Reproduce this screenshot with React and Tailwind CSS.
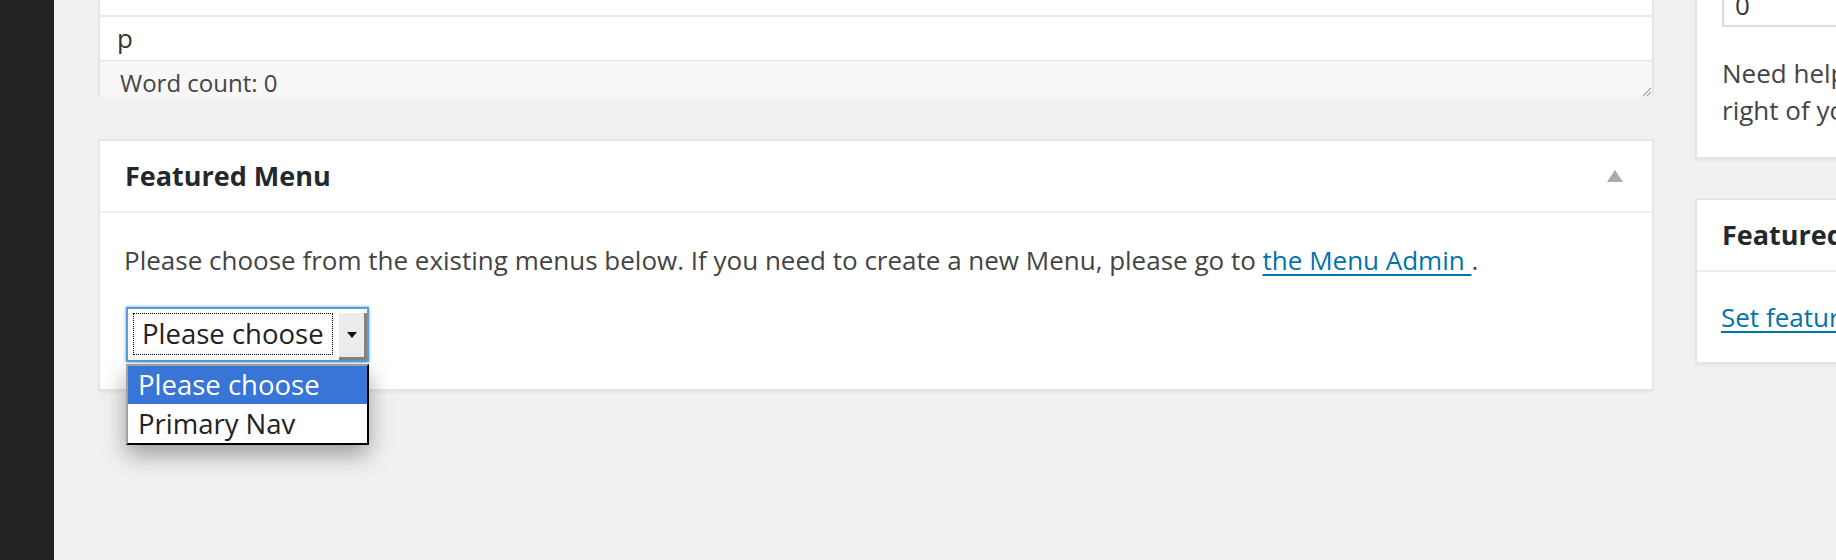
import React from 'react';

function ResizeHandle() {
    return (
        <svg width="12" height="12" viewBox="0 0 12 12" className="absolute bottom-0 right-0">
            <path d="M11 3 L3 11 M11 7 L7 11" stroke="#a7a7a7" strokeWidth="1.2" />
        </svg>
    );
}

function MenuSelect() {
    return (
        <div className="relative ml-[2px] mt-[29px] w-[243px]">
            <div className="flex h-[55px] border-2 border-[#5b9dd9] bg-white shadow-[0_0_3px_rgba(30,140,190,0.8)]">
                <div className="flex flex-1 pl-[5px] pt-[4px] pb-[5px] pr-[6px]">
                    <div className="flex flex-1 items-center border border-dotted border-black pl-[8px] text-[27.5px] leading-none text-[#222]">
                        Please choose
                    </div>
                </div>
                <div className="mt-[4px] flex w-[28px] items-center justify-center border-r-[3px] border-b-[3px] border-[#858585] bg-[#ececec]">
                    <svg width="10" height="6" viewBox="0 0 10 6">
                        <path d="M0 0 H10 L5 6 Z" fill="#111" />
                    </svg>
                </div>
            </div>
            {/* open option list */}
            <div className="absolute left-0 top-[57px] z-10 w-[243px] border-2 border-t-[#a0a0a0] border-l-[#a0a0a0] border-r-black border-b-black bg-white shadow-[0_10px_22px_rgba(0,0,0,0.35)]">
                <div className="flex h-[38px] items-center bg-[#3875d7] pl-[10px] text-[27.5px] text-white">Please choose</div>
                <div className="flex h-[39px] items-center pl-[10px] text-[27.5px] text-[#222]">Primary Nav</div>
            </div>
        </div>
    );
}

export default function App() {
    return (
        <div className="flex h-[560px] w-[1836px] overflow-hidden bg-[#f1f1f1] font-['Open_Sans',sans-serif] text-[#444]">
            <div className="w-[54px] shrink-0 bg-[#222]" />

            <div className="flex min-w-0 flex-1 gap-[41px] pl-[44px]">
                {/* main column */}
                <div className="flex w-[1556px] shrink-0 flex-col">
                    <div className="border-x-2 border-[#e5e5e5] bg-white">
                        <div className="h-[15px]" />
                        <div className="flex h-[45px] items-center border-t-2 border-[#e8e8e8] pl-[17px] text-[26px] text-[#333]">
                            p
                        </div>
                        <div className="relative h-[37px] border-t border-[#e2e2e2] bg-[#f7f7f7] pl-[20px] pt-[7px] text-[24px] leading-[29px] text-[#444]">
                            Word count: 0
                            <ResizeHandle />
                        </div>
                    </div>

                    <div className="mt-[42px] border-2 border-[#e5e5e5] bg-white shadow-[0_2px_2px_rgba(0,0,0,0.04)]">
                        <div className="flex h-[72px] items-center justify-between border-b-2 border-[#eee] pl-[25px] pr-[29px]">
                            <h2 className="text-[27px] font-bold text-[#23282d]">Featured Menu</h2>
                            <svg width="16" height="12" viewBox="0 0 16 12">
                                <path d="M8 0 L16 12 H0 Z" fill="#aaa" />
                            </svg>
                        </div>
                        <div className="px-[24px] pt-[29px] pb-[27px]">
                            <p className="text-[26px] leading-[36px]">
                                Please choose from the existing menus below. If you need to create a new Menu, please go to{' '}
                                <a href="#" className="text-[#0073aa] underline underline-offset-[4px]">the Menu Admin </a>.
                            </p>
                            <MenuSelect />
                        </div>
                    </div>
                </div>

                {/* sidebar column */}
                <div className="flex w-[560px] shrink-0 flex-col">
                    <div className="-mt-[40px] border-2 border-[#e5e5e5] bg-white pl-[25px] pb-[28px] pt-[5px] shadow-[0_2px_2px_rgba(0,0,0,0.04)]">
                        <div className="h-[60px] w-[200px] border-2 border-[#ddd] px-[11px] pt-[18px] text-[26px] leading-[36px] text-[#333] shadow-[inset_0_2px_4px_rgba(0,0,0,0.07)]">
                            0
                        </div>
                        <p className="mt-[28px] whitespace-nowrap text-[26px] leading-[37px]">
                            Need help? Use the Help tab in the upper
                            <br />
                            right of your screen.
                        </p>
                    </div>

                    <div className="mt-[39px] border-2 border-[#e5e5e5] bg-white shadow-[0_2px_2px_rgba(0,0,0,0.04)]">
                        <div className="flex h-[72px] items-center border-b-2 border-[#eee] pl-[25px]">
                            <h2 className="text-[27px] font-bold text-[#23282d]">Featured Image</h2>
                        </div>
                        <div className="px-[24px] pt-[27px] pb-[27px]">
                            <a href="#" className="text-[26px] leading-[36px] text-[#0073aa] underline underline-offset-[4px]">
                                Set featured image
                            </a>
                        </div>
                    </div>
                </div>
            </div>
        </div>
    );
}
